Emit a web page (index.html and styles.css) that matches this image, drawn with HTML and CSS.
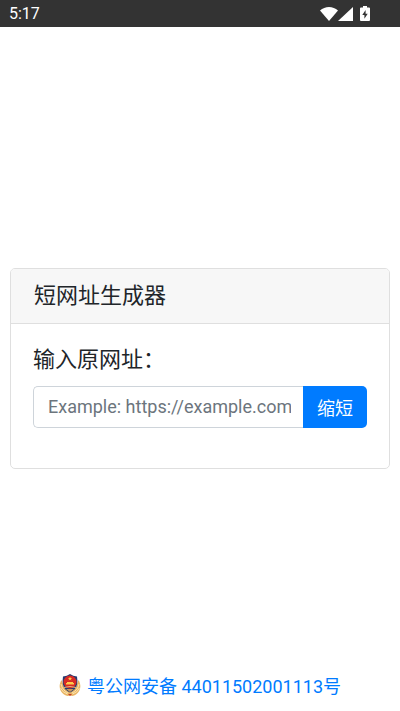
FILE: index.html
```html
<!DOCTYPE html>
<html lang="zh-CN">
<head>
  <meta charset="UTF-8">
  <meta name="viewport" content="width=device-width, initial-scale=1.0">
  <title>短网址生成器</title>
  <link rel="stylesheet" href="styles.css">
</head>
<body>

<header class="status-bar">
  <span class="clock">5:17</span>
  <div class="status-icons">
    <svg width="18" height="14" viewBox="0 0 18 14" fill="#fff"><path d="M0 3.600C5-1.200 13-1.200 18 3.600L9 14Z"/></svg>
    <svg width="15" height="14" viewBox="0 0 15 14" fill="#fff"><path d="M15 0V14H0Z"/></svg>
    <svg class="battery" width="10" height="15" viewBox="0 0 10 15"><path fill="#fff" d="M3 0h4v1.500h2q1 0 1 1V14q0 1-1 1H1q-1 0-1-1V2.500q0-1 1-1h2z"/><path fill="#333" d="M5.600 4 2.300 9h2.100v3.700L7.700 7.700H5.600z"/></svg>
  </div>
</header>

<main class="page">
  <section class="card">
    <h1 class="card-header">短网址生成器</h1>
    <form class="card-body">
      <label class="url-label" for="url">输入原网址：</label>
      <div class="input-group">
        <input class="url-input" type="text" id="url" placeholder="Example: https://example.com">
        <button class="shorten-btn" type="button">缩短</button>
      </div>
    </form>
  </section>

  <footer class="footer">
    <a class="record-link" href="#">
      <svg width="22" height="24" viewBox="0 0 22 24">
        <path fill="#e9b565" d="M2.500 7C-.5 12 0 18 5 21.500Q8 23.800 11 22.500q3 1.300 6-1C22 18 22.500 12 19.500 7L17 14H5z"/>
        <path fill="none" stroke="#fbe3ac" d="M2 11q1 6 7 9M1.500 15q2 4.500 7 6M20 11q-1 6-7 9M20.500 15q-2 4.500-7 6"/>
        <path fill="#263b70" d="M11 1Q14 3.200 18 3.500q1.500 9-2.500 13-2 2-4.500 3-2.500-1-4.500-3-4-4-2.500-13Q8 3.200 11 1z"/>
        <circle cx="11" cy="9" r="6.500" fill="#d82b24"/>
        <path fill="#ffc94b" d="m11 3.700.6 1.400h1.500l-1.200.9.5 1.400-1.400-.8-1.400.8.5-1.400-1.200-.9h1.500zM8 9h6v1h1v1.500H7V10h1z"/>
        <path fill="none" stroke="#e0b980" d="M5 14.500q6-2 12 0"/>
        <path fill="#c9975c" d="M7 16h8l-4 3z"/>
        <path fill="#c63c28" d="M9 21h4l-2 2z"/>
      </svg>
      <span>粤公网安备 44011502001113号</span>
    </a>
  </footer>
</main>

</body>
</html>
```

FILE: styles.css
```css
* {
  box-sizing: border-box;
}
body {
  display: flex;
  flex-direction: column;
  min-height: 100vh;
  margin: 0;
  font-family: Roboto, "Noto Sans CJK SC", sans-serif;
  font-size: 18px;
  color: #212529;
  background-color: #fff;
}
.status-bar {
  display: flex;
  justify-content: space-between;
  align-items: center;
  height: 27px;
  padding: 0 30px 0 9px;
  background-color: #333;
  color: #fff;
}
.clock {
  font-size: 16px;
}
.status-icons {
  display: flex;
  align-items: center;
}
.battery {
  margin-left: 7px;
}
/* equal rows above and below keep the card in the middle */
.page {
  display: grid;
  flex: 1;
  grid-template-rows: 1fr auto 1fr;
  padding: 0 10px 2px;
}
.card {
  grid-row: 2;
  border: 1px solid #dfdfdf;
  border-radius: 5px;
}
.card-header {
  margin: 0;
  padding: 11px 23px;
  border-bottom: 1px solid #dfdfdf;
  border-radius: 4px 4px 0 0;
  background-color: #f7f7f7;
  font-size: 22px;
  font-weight: 400;
  line-height: 32px;
}
.card-body {
  padding: 20px 22px 40px;
}
.url-label {
  display: block;
  margin-bottom: 10px;
  font-size: 22px;
  line-height: 32px;
}
.input-group {
  display: flex;
  height: 42px;
}
.url-input {
  flex: 1;
  min-width: 0;
  padding: 0 12px 0 14px;
  border: 1px solid #ced4da;
  border-right: 0;
  border-radius: 5px 0 0 5px;
  font: inherit;
  color: #495057;
}
.url-input::placeholder {
  color: #6c757d;
}
.shorten-btn {
  padding: 0 14px;
  border: 0;
  border-radius: 0 5px 5px 0;
  background-color: #007bff;
  color: #fff;
  font: inherit;
  cursor: pointer;
}
.footer {
  grid-row: 3;
  align-self: end;
  padding-bottom: 8px;
  text-align: center;
}
.record-link {
  display: inline-flex;
  align-items: center;
  gap: 6px;
  color: #007bff;
  text-decoration: none;
}
```
